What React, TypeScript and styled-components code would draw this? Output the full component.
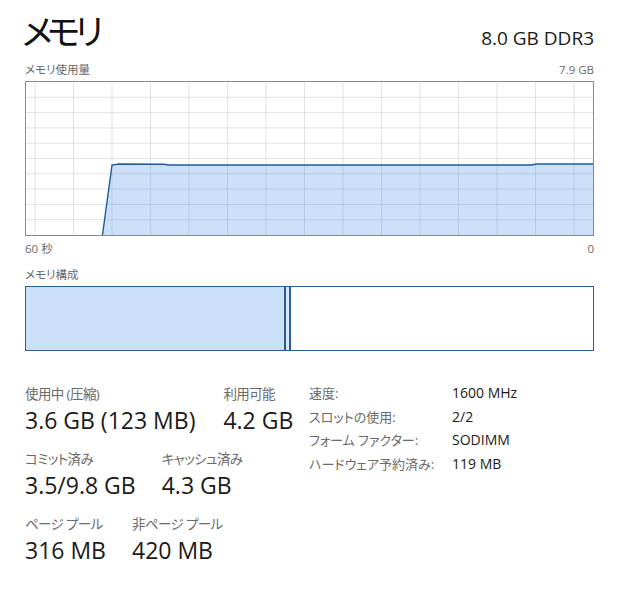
import styled, { createGlobalStyle } from 'styled-components'

const GlobalStyle = createGlobalStyle`
  html, body {
    margin: 0;
    padding: 0;
    background: #ffffff;
  }
  body {
    font-family: 'Open Sans', 'Noto Sans CJK JP', sans-serif;
    color: #1a1a1a;
  }
`

// graph samples in local svg coordinates (inner area 567 x 153)
const GRAPH_W = 567
const GRAPH_H = 153
const usage: [number, number][] = [
  [76.5, GRAPH_H],
  [86, 83],
  [93, 82],
  [138, 82.3],
  [143, 83],
  [505, 83],
  [511, 82],
  [GRAPH_W, 82],
]

const vLines = Array.from({ length: 15 }, (_, i) => 9 + i * 38.5)
const hLines = Array.from({ length: 9 }, (_, i) => (i + 1) * (GRAPH_H / 10))

const totalGb = 7.9
const inUseGb = 3.6
const modifiedGb = 0.03

const leftStats = [
  [
    { label: '使用中 (圧縮)', value: '3.6 GB (123 MB)' },
    { label: '利用可能', value: '4.2 GB' },
  ],
  [
    { label: 'コミット済み', value: '3.5/9.8 GB' },
    { label: 'キャッシュ済み', value: '4.3 GB' },
  ],
  [
    { label: 'ページ プール', value: '316 MB' },
    { label: '非ページ プール', value: '420 MB' },
  ],
]

const details = [
  ['速度:', '1600 MHz'],
  ['スロットの使用:', '2/2'],
  ['フォーム ファクター:', 'SODIMM'],
  ['ハードウェア予約済み:', '119 MB'],
]

export default function App() {
  const line = usage.map(([x, y]) => `${x},${y}`).join(' ')
  const area = `${line} ${GRAPH_W},${GRAPH_H}`

  return (
    <>
      <GlobalStyle />
      <Page>
        <Header>
          <Title>メモリ</Title>
          <Spec>8.0 GB DDR3</Spec>
        </Header>

        <CaptionRow>
          <Caption>メモリ使用量</Caption>
          <Caption>7.9 GB</Caption>
        </CaptionRow>
        <GraphFrame>
          <svg width={GRAPH_W} height={GRAPH_H} viewBox={`0 0 ${GRAPH_W} ${GRAPH_H}`}>
            <polygon points={area} fill="#cadff8" />
            {vLines.map((x) => (
              <line key={'v' + x} x1={x} y1={0} x2={x} y2={GRAPH_H} stroke="rgba(110,120,140,0.2)" strokeWidth={1} />
            ))}
            {hLines.map((y) => (
              <line key={'h' + y} x1={0} y1={y} x2={GRAPH_W} y2={y} stroke="rgba(110,120,140,0.2)" strokeWidth={1} />
            ))}
            <polyline points={line} fill="none" stroke="#1f5c9e" strokeWidth={1.4} />
          </svg>
        </GraphFrame>
        <AxisRow>
          <Caption>60 秒</Caption>
          <Caption>0</Caption>
        </AxisRow>

        <CaptionRow $top={10}>
          <Caption>メモリ構成</Caption>
        </CaptionRow>
        <Composition>
          <Segment $fill="#cadff8" style={{ width: `${(inUseGb / totalGb) * 100}%` }} />
          <Segment $fill="#d6e7fb" style={{ width: `${(modifiedGb / totalGb) * 100}%` }} />
          <Segment $fill="#ffffff" $grow />
        </Composition>

        <Stats>
          <LeftStats>
            {leftStats.map((row, i) => (
              <StatRow key={i}>
                {row.map((s) => (
                  <Stat key={s.label}>
                    <StatLabel>{s.label}</StatLabel>
                    <StatValue>{s.value}</StatValue>
                  </Stat>
                ))}
              </StatRow>
            ))}
          </LeftStats>
          <Details>
            {details.map(([k, v]) => (
              <DetailRow key={k}>
                <DetailKey>{k}</DetailKey>
                <DetailValue>{v}</DetailValue>
              </DetailRow>
            ))}
          </Details>
        </Stats>
      </Page>
    </>
  )
}

const Page = styled.div`
  width: 569px;
  padding: 0 28px 0 25px;
`

const Header = styled.div`
  display: flex;
  justify-content: space-between;
  align-items: flex-start;
  height: 62px;
`

const Title = styled.h1`
  margin: 10px 0 0 -3px;
  font-family: 'Noto Sans CJK JP', sans-serif;
  font-feature-settings: 'palt';
  font-weight: 400;
  font-size: 35px;
  letter-spacing: -5.5px;
  line-height: 40px;
  color: #111;
`

const Spec = styled.div`
  margin-top: 26px;
  font-size: 19px;
  line-height: 24px;
  color: #1a1a1a;
`

const CaptionRow = styled.div<{ $top?: number }>`
  display: flex;
  justify-content: space-between;
  margin-top: ${(p) => p.$top ?? 0}px;
  height: 19px;
`

const Caption = styled.span`
  font-family: 'Open Sans', 'Noto Sans CJK JP', sans-serif;
  font-feature-settings: 'palt';
  font-size: 11.5px;
  line-height: 16px;
  color: #6a6a6a;
`

const GraphFrame = styled.div`
  border: 1px solid #8a8a8a;
  height: ${GRAPH_H}px;
  line-height: 0;
  svg {
    display: block;
  }
`

const AxisRow = styled.div`
  display: flex;
  justify-content: space-between;
  margin-top: 5px;
  height: 16px;
`

const Composition = styled.div`
  display: flex;
  height: 63px;
  border: 1px solid #2b5c94;
`

const Segment = styled.div<{ $fill: string; $grow?: boolean }>`
  background: ${(p) => p.$fill};
  border-right: ${(p) => (p.$grow ? 'none' : '2px solid #2b5c94')};
  flex: ${(p) => (p.$grow ? '1' : 'none')};
`

const Stats = styled.div`
  display: flex;
  margin-top: 33px;
`

const LeftStats = styled.div`
  display: flex;
  flex-direction: column;
  gap: 13px;
  width: 284px;
`

const StatRow = styled.div`
  display: flex;
  gap: 26px;
  &:first-child {
    gap: 28px;
  }
`

const Stat = styled.div`
  display: flex;
  flex-direction: column;
`

const StatLabel = styled.span`
  font-feature-settings: 'palt';
  font-size: 13.5px;
  letter-spacing: -0.6px;
  line-height: 20px;
  color: #6a6a6a;
  white-space: nowrap;
`

const StatValue = styled.span`
  font-size: 23px;
  line-height: 32px;
  color: #1a1a1a;
  white-space: nowrap;
`

const Details = styled.div`
  display: flex;
  flex-direction: column;
  margin-top: -3px;
`

const DetailRow = styled.div`
  display: flex;
  height: 23.5px;
  align-items: center;
`

const DetailKey = styled.span`
  width: 143px;
  font-feature-settings: 'palt';
  font-size: 13px;
  color: #6a6a6a;
  white-space: nowrap;
`

const DetailValue = styled.span`
  font-size: 14px;
  color: #1a1a1a;
`
